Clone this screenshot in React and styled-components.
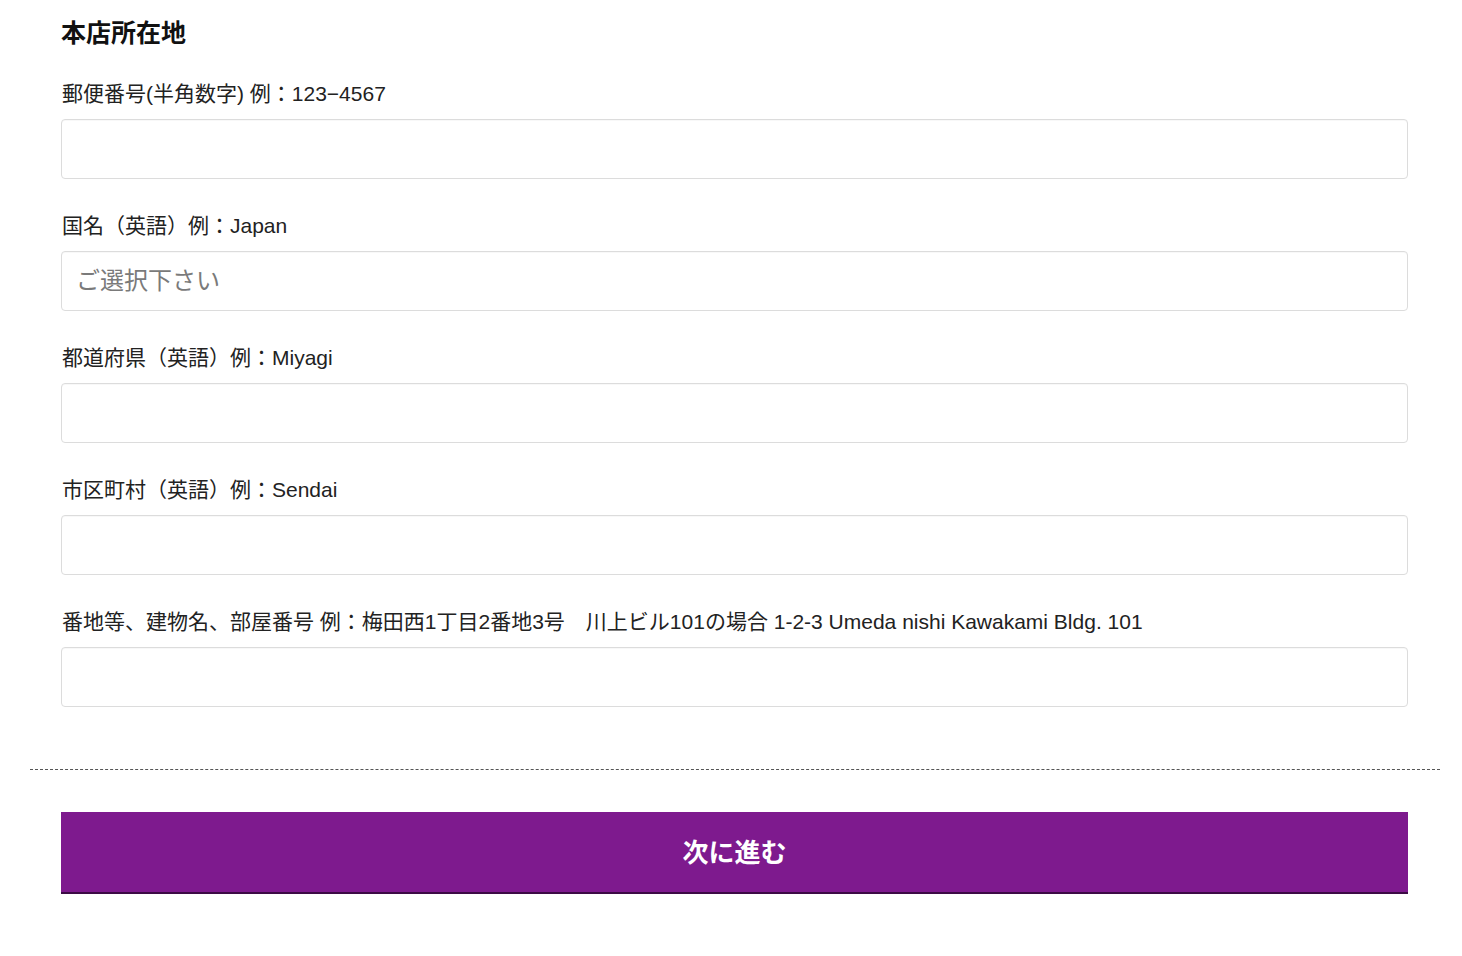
import React from "react";
import styled, { createGlobalStyle } from "styled-components";

const Global = createGlobalStyle`
  html, body { margin: 0; padding: 0; background: #fff; }
  body { font-family: "Liberation Sans", Arial, "Noto Sans CJK JP", sans-serif; color: #222; }
  * { box-sizing: border-box; }
`;

const Page = styled.div`
  width: 1410px;
  margin-left: 30px;
`;

const Section = styled.section`
  padding: 18px 32px 0 31px;
`;

const Heading = styled.h3`
  margin: 0 0 31px;
  font-size: 25px;
  line-height: 30px;
  font-weight: bold;
  color: #111;
`;

const Field = styled.div`
  display: flex;
  flex-direction: column;
  gap: 10px;
  margin-bottom: 32px;
  &:last-child { margin-bottom: 0; }
`;

const Label = styled.label`
  font-size: 21px;
  line-height: 30px;
  color: #222;
  padding-left: 1px;
  white-space: pre;
`;

const Input = styled.input`
  height: 60px;
  width: 100%;
  border: 1px solid #dcdcdc;
  border-radius: 4px;
  padding: 0 14px;
  font-size: 24px;
  font-family: inherit;
  color: #222;
  background: #fff;
  box-shadow: inset 0 1px 1px rgba(0,0,0,0.03);
  outline: none;
  &::placeholder { color: #7a7a7a; }
`;

const Divider = styled.hr`
  margin: 62px 0 42px;
  border: 0;
  border-top: 1px dashed #555;
  height: 0;
`;

const ButtonWrap = styled.div`
  padding: 0 32px 0 31px;
`;

const Submit = styled.button`
  width: 100%;
  height: 82px;
  background: #7e1a8e;
  border: 0;
  border-bottom: 2px solid #3c0b45;
  color: #fff;
  font-size: 26px;
  font-weight: bold;
  font-family: "Noto Sans CJK JP", "Liberation Sans", sans-serif;
  cursor: pointer;
  display: flex;
  align-items: center;
  justify-content: center;
  padding: 0 0 4px;
`;

const fields = [
  { label: "郵便番号(半角数字) 例：123−4567" },
  { label: "国名（英語）例：Japan", placeholder: "ご選択下さい" },
  { label: "都道府県（英語）例：Miyagi" },
  { label: "市区町村（英語）例：Sendai" },
  { label: "番地等、建物名、部屋番号 例：梅田西1丁目2番地3号　川上ビル101の場合 1-2-3 Umeda nishi Kawakami Bldg. 101" },
];

export default function App() {
  return (
    <Page>
      <Global />
      <Section>
        <Heading>本店所在地</Heading>
        {fields.map((f, i) => (
          <Field key={i}>
            <Label>{f.label}</Label>
            <Input placeholder={f.placeholder || ""} />
          </Field>
        ))}
      </Section>
      <Divider />
      <ButtonWrap>
        <Submit>次に進む</Submit>
      </ButtonWrap>
    </Page>
  );
}
